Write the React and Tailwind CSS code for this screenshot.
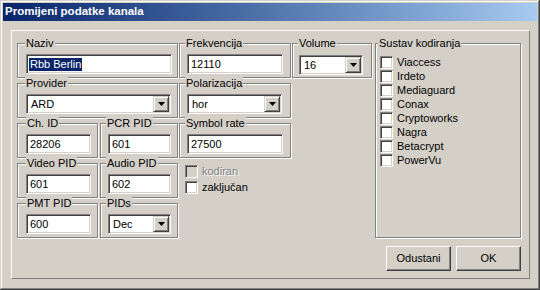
const sunken =
  'bg-white border border-t-[#808080] border-l-[#808080] border-b-white border-r-white shadow-[inset_1px_1px_0_#404040,inset_-1px_-1px_0_#d4d0c8]';

function Group({ className, label, lx = 'left-[7px]', children }) {
  return (
    <div className={`relative border border-[#808080] shadow-[inset_1px_1px_0_#fff,1px_1px_0_#fff] ${className}`}>
      <span className={`absolute -top-[8px] ${lx} bg-[#d4d0c8] px-px leading-[14px] text-black`}>{label}</span>
      {children}
    </div>
  );
}

function TextBox({ w, value, selected }) {
  return (
    <div className={`${sunken} ${w} h-[20px] flex items-center pl-[2px]`}>
      {selected ? <span className="bg-[#0a246a] text-white leading-[13px] px-px">{value}</span> : <span className="px-px">{value}</span>}
    </div>
  );
}

function Combo({ w, value }) {
  return (
    <div className={`${sunken} ${w} h-[20px] flex items-stretch p-[1px]`}>
      <span className="flex-1 flex items-center pl-[3px]">{value}</span>
      <span className="w-[16px] bg-[#d4d0c8] border border-t-[#d4d0c8] border-l-[#d4d0c8] border-b-[#404040] border-r-[#404040] shadow-[inset_1px_1px_0_#fff,inset_-1px_-1px_0_#808080] flex items-center justify-center">
        <svg width="7" height="4" viewBox="0 0 7 4">
          <path d="M0 0h7L3.5 4z" fill="#000" />
        </svg>
      </span>
    </div>
  );
}

function Check({ label, disabled }) {
  return (
    <div className="flex items-center h-[13px]">
      <span className={`${sunken} w-[13px] h-[13px] shrink-0 ${disabled ? '!bg-[#d4d0c8]' : ''}`} />
      <span className={`ml-[4px] ${disabled ? 'text-[#808080] [text-shadow:1px_1px_0_#fff]' : ''}`}>{label}</span>
    </div>
  );
}

function Button({ children }) {
  return (
    <div className="w-[65px] h-[25px] flex items-center justify-center bg-[#d4d0c8] border border-t-white border-l-white border-b-[#404040] border-r-[#404040] shadow-[inset_-1px_-1px_0_#808080]">
      {children}
    </div>
  );
}

const systems = ['Viaccess', 'Irdeto', 'Mediaguard', 'Conax', 'Cryptoworks', 'Nagra', 'Betacrypt', 'PowerVu'];

export default function App() {
  return (
    <div className="w-[540px] h-[290px] bg-[#d4d0c8] p-[3px] font-['Liberation_Sans',Arial,sans-serif] text-[11px] text-black shadow-[inset_-1px_-1px_0_#404040,inset_1px_1px_0_#d4d0c8,inset_-2px_-2px_0_#808080,inset_2px_2px_0_#fff]">
      <div className="h-[18px] bg-gradient-to-r from-[#0a246a] to-[#a6caf0] flex items-center pl-[2px]">
        <span className="text-white font-bold text-[11.5px]">Promijeni podatke kanala</span>
      </div>

      <div className="mt-[9px] ml-[8px] w-[519px] h-[249px] border border-t-white border-l-white border-b-[#808080] border-r-[#808080] flex pl-[5px] pt-[12px]">
        {/* left fields */}
        <div className="flex flex-col gap-[5px]">
          <div className="flex gap-px">
            <Group className="w-[161px] h-[35px] pt-[10px] pl-[8px]" label="Naziv">
              <TextBox w="w-[146px]" value="Rbb Berlin" selected />
            </Group>
            <Group className="w-[112px] h-[35px] pt-[10px] pl-[7px]" label="Frekvencija" lx="left-[5px]">
              <TextBox w="w-[96px]" value="12110" />
            </Group>
            <Group className="w-[80px] h-[35px] pt-[11px] pl-[6px]" label="Volume" lx="left-[5px]">
              <Combo w="w-[64px]" value="16" />
            </Group>
          </div>

          <div className="flex gap-px">
            <Group className="w-[161px] h-[35px] pt-[10px] pl-[8px]" label="Provider">
              <Combo w="w-[145px]" value="ARD" />
            </Group>
            <Group className="w-[112px] h-[35px] pt-[10px] pl-[7px]" label="Polarizacija" lx="left-[5px]">
              <Combo w="w-[95px]" value="hor" />
            </Group>
          </div>

          <div className="flex gap-px">
            <div className="flex gap-[2px]">
              <Group className="w-[81px] h-[35px] pt-[10px] pl-[8px]" label="Ch. ID" lx="left-[8px]">
                <TextBox w="w-[65px]" value="28206" />
              </Group>
              <Group className="w-[78px] h-[35px] pt-[10px] pl-[7px]" label="PCR PID" lx="left-[5px]">
                <TextBox w="w-[63px]" value="601" />
              </Group>
            </div>
            <Group className="w-[112px] h-[35px] pt-[10px] pl-[7px]" label="Symbol rate" lx="left-[5px]">
              <TextBox w="w-[96px]" value="27500" />
            </Group>
          </div>

          <div className="flex gap-px">
            <div className="flex gap-[2px]">
              <Group className="w-[81px] h-[35px] pt-[10px] pl-[8px]" label="Video PID" lx="left-[8px]">
                <TextBox w="w-[65px]" value="601" />
              </Group>
              <Group className="w-[78px] h-[35px] pt-[10px] pl-[7px]" label="Audio PID" lx="left-[5px]">
                <TextBox w="w-[63px]" value="602" />
              </Group>
            </div>
            <div className="flex flex-col gap-[3px] pl-[6px] pt-[2px]">
              <Check label="kodiran" disabled />
              <Check label="zaključan" />
            </div>
          </div>

          <div className="flex gap-[2px]">
            <Group className="w-[81px] h-[35px] pt-[10px] pl-[8px]" label="PMT PID" lx="left-[8px]">
              <TextBox w="w-[65px]" value="600" />
            </Group>
            <Group className="w-[78px] h-[35px] pt-[10px] pl-[7px]" label="PIDs" lx="left-[5px]">
              <Combo w="w-[63px]" value="Dec" />
            </Group>
          </div>
        </div>

        {/* right column */}
        <div className="ml-[3px] flex flex-col">
          <Group className="w-[146px] h-[195px] pt-[12px] pl-[4px]" label="Sustav kodiranja" lx="left-[2px]">
            <div className="flex flex-col gap-px">
              {systems.map((s) => (
                <Check key={s} label={s} />
              ))}
            </div>
          </Group>
          <div className="mt-[8px] flex justify-end gap-[5px]">
            <Button>Odustani</Button>
            <Button>OK</Button>
          </div>
        </div>
      </div>
    </div>
  );
}
